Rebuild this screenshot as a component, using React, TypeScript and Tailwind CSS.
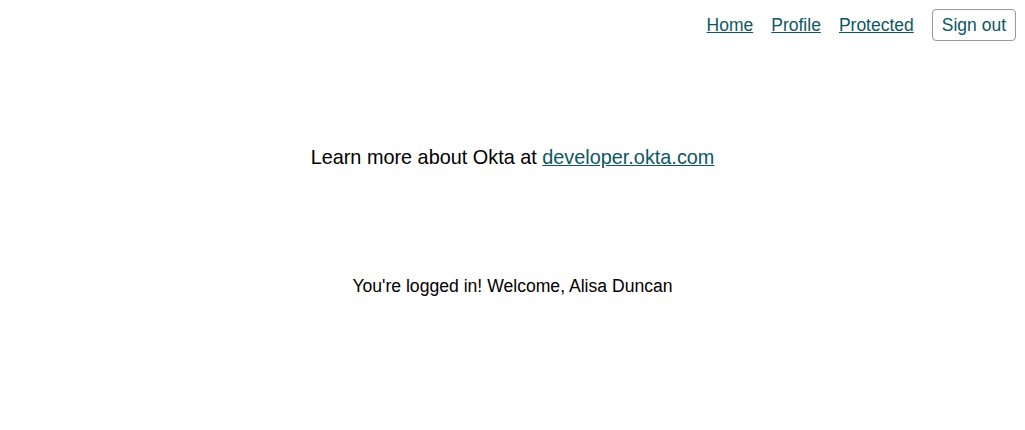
export default function App() {
  return (
    <div className="min-h-[430px] bg-white text-black font-['Liberation_Sans',Arial,sans-serif]">
      <nav className="flex justify-end items-center gap-[18px] pt-[9px] pr-[9px] text-[17.5px]">
        <a href="#" className="underline text-[#0d5663]">Home</a>
        <a href="#" className="underline text-[#0d5663]">Profile</a>
        <a href="#" className="underline text-[#0d5663]">Protected</a>
        <button className="h-[32px] px-[9px] border border-[#9a9a9a] rounded-[4px] text-[#0d5663] bg-white">Sign out</button>
      </nav>
      <div className="mt-[104px] text-center text-[19.85px] leading-[24px]">
        Learn more about Okta at{" "}
        <a href="#" className="underline text-[#0d5663]">developer.okta.com</a>
      </div>
      <div className="mt-[107px] text-center text-[17.6px] leading-[20px]">
        You're logged in! Welcome, Alisa Duncan
      </div>
    </div>
  );
}
